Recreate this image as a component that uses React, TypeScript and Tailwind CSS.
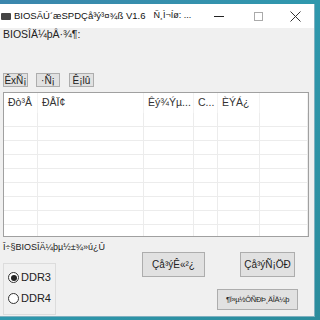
import React from "react"

const cols = [
  { w: 34, t: "Ðò³Å" },
  { w: 106, t: "ÐÅÏ¢" },
  { w: 50, t: "Êý¾Ýµ..." },
  { w: 24, t: "C..." },
  { w: 42, t: "ÈÝÁ¿" },
  { w: 48, t: "" },
]

function Btn({ label, className }: { label: string; className: string }) {
  return (
    <div className={"shrink-0 flex items-center justify-center border border-[#adadad] bg-[#e1e1e1] text-[#222] whitespace-nowrap " + className}>
      {label}
    </div>
  )
}

export default function App() {
  const rows = Array.from({ length: 9 })
  return (
    <div className="w-[320px] h-[320px] overflow-hidden bg-gradient-to-br from-[#3b86ad] via-[#2f98ad] to-[#2b8c9c] pt-[4px] font-['Liberation_Sans',sans-serif]">
      <div className="w-[315px] h-[313px] flex flex-col bg-[#f0f0f0] border-r border-b border-[#7fb0c0]">
        {/* title bar */}
        <div className="shrink-0 h-[24px] bg-white flex items-center text-[9.5px] text-[#111]">
          <div className="w-[10px] h-[7px] bg-[#444] ml-[1px] mr-[3px] rounded-[1px] shrink-0" />
          <div className="flex-1 min-w-0 flex whitespace-nowrap">
            <span>BIOSÃÚ´æSPDÇå³ý³¤¾ß V1.6</span>
            <span className="ml-[8px] text-[9px]">Ñ¸Ì¬Íø: ...</span>
          </div>
          <div className="flex items-center h-full shrink-0">
            <div className="w-[40px] h-full flex items-center justify-center">
              <svg width="10" height="10" viewBox="0 0 10 10" className="block">
                <rect x="0" y="5" width="10" height="1" fill="#222" />
              </svg>
            </div>
            <div className="w-[38px] flex justify-center">
              <div className="w-[9px] h-[9px] border border-[#aaa]" />
            </div>
            <div className="w-[37px] flex justify-center">
              <svg width="11" height="11" viewBox="0 0 11 11" stroke="#333" strokeWidth="1">
                <path d="M0.5 0.5L10.5 10.5M10.5 0.5L0.5 10.5" />
              </svg>
            </div>
          </div>
        </div>

        <div className="flex flex-col px-[3px] text-[11px] text-[#222]">
          <div className="shrink-0 h-[12px] leading-[12px] text-[10.5px]">BIOSÎÄ¼þÂ·¾¶:</div>

          <div className="shrink-0 flex mt-[33px] h-[14px] text-[10px]">
            <Btn label="ÊxÑ¡" className="w-[25px]" />
            <Btn label="·Ñ¡" className="w-[24px] ml-[8px]" />
            <Btn label="Ê¡lû" className="w-[25px] ml-[9px]" />
          </div>

          {/* list view */}
          <div className="shrink-0 mt-[5px] w-[306px] h-[145px] border border-[#a0a0a0] bg-white overflow-hidden">
            <div className="flex h-[20px] text-[10.5px] text-[#333]">
              {cols.map((c, i) => (
                <div key={i} className="h-full flex items-center pl-[4px] whitespace-nowrap border-r border-[#f2f2f2]" style={{ width: c.w }}>
                  {c.t}
                </div>
              ))}
            </div>
            {rows.map((_, r) => (
              <div key={r} className="flex h-[14px] border-b border-[#ececec]">
                {cols.map((c, i) => (
                  <div key={i} className="h-full border-r border-[#ececec]" style={{ width: c.w }} />
                ))}
              </div>
            ))}
          </div>

          <div className="shrink-0 flex mt-[4px]">
            <div className="flex flex-col">
              <div className="h-[12px] leading-[12px] text-[9px] whitespace-nowrap">Î÷§BIOSÎÄ¼þµ½±¾»ú¿Û</div>
              <div className="w-[53px] h-[52px] mt-[10px] border border-[#dcdcdc] flex flex-col pl-[4px] pt-[8px] gap-[10px] text-[11px]">
                <div className="flex items-center gap-[2px] h-[11px]">
                  <div className="w-[11px] h-[11px] rounded-full border border-[#333] bg-white flex items-center justify-center">
                    <div className="w-[6px] h-[6px] rounded-full bg-[#222]" />
                  </div>
                  DDR3
                </div>
                <div className="flex items-center gap-[2px] h-[11px]">
                  <div className="w-[11px] h-[11px] rounded-full border border-[#333] bg-white" />
                  DDR4
                </div>
              </div>
            </div>
            <div className="flex flex-col ml-auto mr-[13px] mt-[11px]">
              <div className="flex pr-[3px] text-[10px]">
                <Btn label="Çå³ýÊ«²¿" className="w-[63px] h-[25px]" />
                <Btn label="Çå³ýÑ¡ÖÐ" className="w-[55px] h-[25px] ml-[35px]" />
              </div>
              <div className="flex justify-end mt-[12px]">
                <Btn label="¶Ï»µ½ÔÑÐÞ¸ÄÎÄ¼þ" className="w-[81px] h-[21px] text-[7.5px] tracking-[-0.3px]" />
              </div>
            </div>
          </div>
        </div>
      </div>
    </div>
  )
}
